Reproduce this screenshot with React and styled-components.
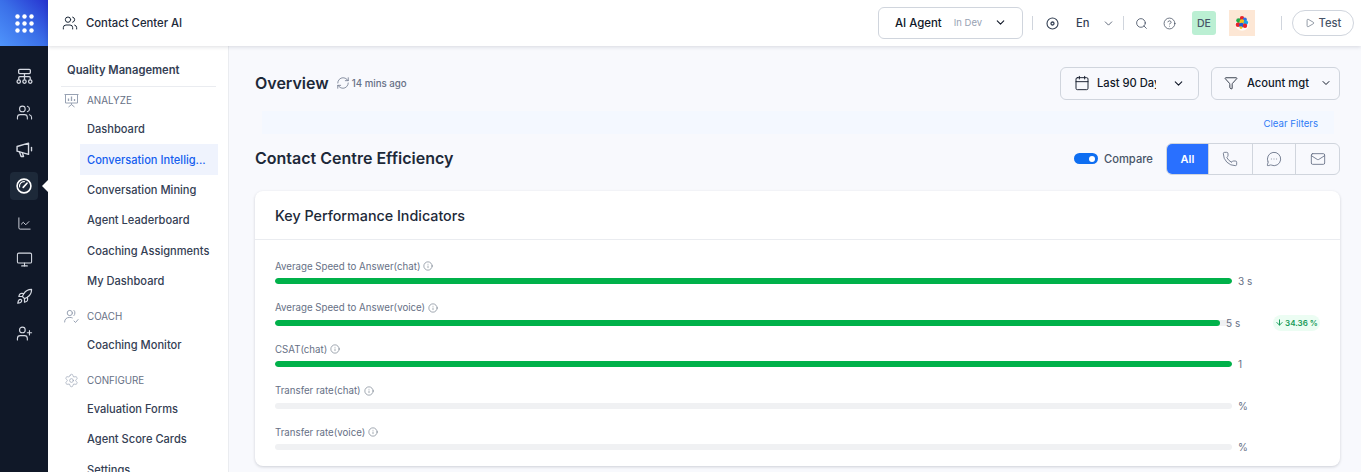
import React from "react";
import styled, { createGlobalStyle } from "styled-components";
import {
  Users, ChartLine, Monitor, Rocket, UserPlus, ChevronDown, Search,
  CircleHelp, Play, Calendar, Funnel, Phone, MessageCircleMore, Mail, RefreshCw, Info, ArrowDown,
  Settings,
} from "lucide-react";

const Global = createGlobalStyle`
  html, body { margin: 0; padding: 0; height: 472px; overflow: hidden; background: #f8f9fd; }
  body { font-family: Inter, "Noto Sans", sans-serif; color: #101828; }
  #root { height: 472px; }
  * { box-sizing: border-box; }
`;

const Page = styled.div`display: flex; width: 1361px; height: 472px; overflow: hidden;`;
const Rail = styled.nav`width: 48px; flex: none; background: #101828; display: flex; flex-direction: column; align-items: center;`;
const Logo = styled.div`
  width: 48px; height: 46px; display: grid; place-items: center; margin-bottom: 16px;
  background: linear-gradient(45deg, #4f94fb 0%, #3a6fe8 50%, #2632cf 100%);
`;
const RailSlot = styled.div`
  position: relative; width: 28px; height: 28px; margin-bottom: 8.8px; display: grid; place-items: center; border-radius: 4px;
  color: #d5d9e2; background: ${p => (p.$active ? "#1d2939" : "transparent")};
`;
const RailArrow = styled.span`
  position: absolute; right: -10px; top: 8px; width: 0; height: 0;
  border-top: 6px solid transparent; border-bottom: 6px solid transparent; border-right: 6px solid #fff;
`;
const Right = styled.div`flex: 1; min-width: 0; display: flex; flex-direction: column;`;
const Header = styled.header`
  position: relative; z-index: 2; height: 46px; flex: none; background: #fff; display: flex; align-items: center;
  box-shadow: 0 1px 4px rgba(16,24,40,.14); padding-left: 14px;
`;
const Product = styled.div`display: flex; align-items: center; gap: 8px; font-size: 11.3px; font-weight: 500; color: #1d2939; flex: 1;`;
const AgentBox = styled.div`
  width: 145px; height: 32px; border: 1px solid #d0d5dd; border-radius: 6px; display: flex; align-items: center; padding-left: 16px;
  font-size: 11.4px; font-weight: 500; color: #101828; margin-bottom: 1px;
`;
const Dev = styled.span`font-size: 9.5px; font-weight: 400; color: #98a2b3; margin-left: 12px; flex: 1;`;
const Divider = styled.span`width: 1px; height: 14px; background: #d0d5dd; flex: none; margin-left: ${p => p.$l}px; margin-right: ${p => p.$r}px;`;
const HeadIcon = styled.span`display: grid; place-items: center; color: #344054; margin-right: ${p => p.$r || 0}px; margin-top: 1px;`;
const Lang = styled.span`font-size: 11.2px; font-weight: 500; color: #344054; width: 26px; margin-left: 17px;`;
const Avatar = styled.span`
  width: 24px; height: 24px; border-radius: 3px; background: #bbefd3; color: #475467; font-size: 10.5px; font-weight: 500;
  display: grid; place-items: center; margin: 0 13px 0 16px;
`;
const Balloon = styled.span`width: 26px; height: 26px; background: #fde7d5; display: grid; place-items: center;`;
const TestBtn = styled.button`
  height: 26px; width: 62px; border: 1px solid #d0d5dd; border-radius: 13px; background: #fff; margin-right: 7px; margin-left: 10px;
  display: flex; align-items: center; justify-content: center; gap: 4px; font: 500 11.2px Inter, sans-serif; color: #475467; padding: 0;
`;
const Body = styled.div`flex: 1; display: flex; min-height: 0;`;
const Side = styled.aside`width: 181px; flex: none; background: #fff; border-right: 1px solid #eaecf0; padding: 15px 0 0 13px; overflow: hidden;`;
const SideTitle = styled.div`
  width: 155px; height: 26px; font-size: 11.2px; font-weight: 600; color: #344054; padding-left: 6px; padding-top: 1px;
  border-bottom: 1px solid #eaecf0; line-height: 16px;
`;
const Section = styled.div`
  display: flex; align-items: center; height: 22px; font-size: 9.8px; color: #667085; margin-top: ${p => p.$mt || 0}px; margin-bottom: ${p => p.$mb ?? 3}px; padding-left: 3px; gap: 8px;
  svg { color: #98a2b3; flex: none; }
`;
const NavItem = styled.div`
  width: 138px; height: 30.4px; margin-left: 19px; padding-left: 7px; display: flex; align-items: center;
  font-size: 11.1px; font-weight: 500; white-space: nowrap; overflow: hidden;
  color: ${p => (p.$active ? "#155eef" : "#344054")}; background: ${p => (p.$active ? "#eff3fd" : "transparent")};
`;
const Main = styled.main`flex: 1; min-width: 0; padding: 0 21px 0 26px; display: flex; flex-direction: column; overflow: hidden;`;
const TopRow = styled.div`height: 65px; flex: none; display: flex; align-items: center; padding-top: 9px;`;
const Title = styled.h1`margin: 0; font-size: 16px; font-weight: 600; color: #1d2939; line-height: 20px;`;
const Ago = styled.div`display: flex; align-items: center; gap: 2px; margin-left: 7px; flex: 1; font-size: 9.7px; font-weight: 500; color: #667085; svg { color: #667085; }`;
const Select = styled.div`
  width: ${p => p.$w}px; height: 33px; margin-left: ${p => p.$l || 0}px; border: 1px solid #d0d5dd; border-radius: 6px;
  display: flex; align-items: center; font-size: 11.2px; font-weight: 500; color: #101828; padding-left: ${p => p.$p}px;
`;
const SelText = styled.span`margin-left: ${p => p.$l}px; width: ${p => p.$w}px; overflow: hidden; white-space: nowrap;`;
const Band = styled.div`
  height: 23px; flex: none; margin: 0 6px 0 7px; background: #f4f8ff; display: flex; justify-content: flex-end; align-items: flex-end;
  font-size: 9.6px; color: #2f7bf6; padding: 0 16px 5px 0;
`;
const SecRow = styled.div`height: 49px; flex: none; margin-bottom: 8px; display: flex; align-items: center;`;
const SecTitle = styled.h2`margin: 0 0 2px; flex: 1; font-size: 16px; font-weight: 600; color: #1d2939;`;
const Toggle = styled.span`width: 24px; height: 11px; border-radius: 6px; background: #0e6ef1; display: flex; justify-content: flex-end; align-items: center; padding-right: 3px; &::after { content: ""; width: 6px; height: 6px; border-radius: 50%; background: #fff; }`;
const CompareLabel = styled.span`font-size: 11.2px; font-weight: 500; color: #475467; margin: 0 13px 0 6px;`;
const Tabs = styled.div`display: flex; height: 32px; border: 1px solid #d0d5dd; border-radius: 6px; overflow: hidden;`;
const Tab = styled.div`
  width: ${p => p.$w || 43.7}px; display: grid; place-items: center; font-size: 11px; font-weight: 600; color: ${p => (p.$active ? "#fff" : "#667085")};
  background: ${p => (p.$active ? "#2970ff" : "transparent")}; border-left: ${p => (p.$first ? "0" : "1px solid #d0d5dd")};
`;
const Card = styled.section`height: 274.5px; flex: none; background: #fff; border-radius: 8px; box-shadow: 0 1px 3px rgba(16,24,40,.18);`;
const CardHead = styled.div`height: 49px; border-bottom: 1px solid #eaecf0; padding-left: 20px; display: flex; align-items: center; font-size: 14.3px; font-weight: 500; color: #1d2939;`;
const Rows = styled.div`padding: 18px 20px 0;`;
const Row = styled.div`height: 41.6px; display: flex; flex-direction: column;`;
const RowLabel = styled.div`height: 17px; padding-bottom: 1px; display: flex; align-items: center; gap: 3px; font-size: 9.7px; color: #667085; svg { color: #475467; }`;
const RowLine = styled.div`display: flex; align-items: center; height: 12px; position: relative;`;
const Track = styled.div`width: 957px; height: 6px; border-radius: 3px; background: #f0f1f3; flex: none; overflow: hidden;`;
const Fill = styled.div`height: 100%; background: #00b14a; border-radius: 3px;`;
const Value = styled.span`font-size: 10px; color: #667085; margin-left: ${p => p.$l}px;`;
const Delta = styled.span`
  position: absolute; left: 998px; top: -2px; width: 47px; height: 16px; border-radius: 8px; background: #ecfdf3; color: #169a58;
  display: flex; align-items: center; justify-content: center; gap: 1px; font-size: 8px; font-weight: 600;
`;

const NodeTree = () => (
  <svg width="17" height="17" viewBox="0 0 16 16" fill="none" stroke="currentColor" strokeWidth="1.2">
    <rect x="2.5" y="1.2" width="11" height="4" rx="1" /><path d="M8 5.2V11M2.6 11V9.2a1 1 0 0 1 1-1h8.8a1 1 0 0 1 1 1V11" />
    <circle cx="2.6" cy="12.8" r="1.6" /><circle cx="8" cy="12.8" r="1.6" /><circle cx="13.4" cy="12.8" r="1.6" />
  </svg>
);
const Horn = () => (
  <svg width="17" height="17" viewBox="0 0 16 16" fill="none" stroke="currentColor" strokeWidth="1.3" strokeLinejoin="round" strokeLinecap="round">
    <path d="M1 5.2 11.8 2v10.6L1 9.6z" /><path d="M3.2 10.2 4.8 14.6h2.3L6 11" /><path d="M14.6 6v3.2" />
  </svg>
);
const GaugeIcon = () => (
  <svg width="16" height="16" viewBox="0 0 16 16" fill="none" stroke="#fff" strokeLinecap="round">
    <circle cx="8" cy="8" r="6.9" strokeWidth="1.6" /><path d="M7.2 9.4 11 5.2" strokeWidth="1.7" /><path d="M3.6 9A4.5 4.5 0 0 1 8.4 3.6" strokeWidth="1.1" />
  </svg>
);
const RecordIcon = () => (
  <svg width="13" height="13" viewBox="0 0 13 13" fill="none" stroke="currentColor" strokeWidth="1.1">
    <circle cx="6.5" cy="6.5" r="5.5" /><circle cx="6.5" cy="6.5" r="1.5" strokeWidth="1.3" />
  </svg>
);
const BoardIcon = () => (
  <svg width="15" height="15" viewBox="0 0 15 15" fill="none" stroke="currentColor" strokeWidth="1">
    <path d="M.5 1.5h14M1.5 1.5v8.5h12V1.5M7.5 10v2M4.5 14l3-2.4 3 2.4" /><path d="M4.5 8V5.5M7.5 8V3.5M10.5 8V6" strokeWidth="1.3" />
  </svg>
);
const CoachIcon = () => (
  <svg width="15" height="15" viewBox="0 0 15 15" fill="none" stroke="currentColor" strokeWidth="1" strokeLinecap="round">
    <circle cx="5.8" cy="4" r="2.6" /><path d="M.6 13c0-3 2-4.6 5.2-4.6 1 0 1.8.2 2.5.5" /><path d="M10 1.4c1.3 1 1.3 4 0 5.2" /><path d="M10 12l1.5 1.5 2.6-3" />
  </svg>
);
const Grid = () => (
  <svg width="19" height="19" viewBox="0 0 19 19" fill="#fff">
    {[2.5, 9.5, 16.5].flatMap(y => [2.5, 9.5, 16.5].map(x => <circle key={`${x}-${y}`} cx={x} cy={y} r="2.2" />))}
  </svg>
);
const Balloons = () => (
  <svg width="16" height="16" viewBox="0 0 16 16">
    <circle cx="8" cy="9" r="6.8" fill="#fff" opacity=".8" />
    <circle cx="8" cy="3.2" r="2.2" fill="#e8232b" /><circle cx="10.8" cy="4.6" r="2.1" fill="#2f6fe0" />
    <circle cx="4.6" cy="5.6" r="2.4" fill="#23a84a" /><circle cx="8" cy="6.8" r="2.5" fill="#f7c21b" />
    <circle cx="11.8" cy="7.6" r="2.3" fill="#1aa3e8" /><circle cx="4" cy="9.8" r="2.3" fill="#e8232b" />
    <circle cx="7.6" cy="10.2" r="2.4" fill="#1f5fd8" /><circle cx="11" cy="10.8" r="2.2" fill="#e8232b" />
    <circle cx="7" cy="12.6" r="1.4" fill="#f7c21b" />
  </svg>
);

const nav1 = ["Dashboard", "Conversation Intellig...", "Conversation Mining", "Agent Leaderboard", "Coaching Assignments", "My Dashboard"];
const rows = [
  { label: "Average Speed to Answer(chat)", width: 100, value: "3 s", l: 6 },
  { label: "Average Speed to Answer(voice)", width: 98.75, value: "5 s", l: -6, delta: "34.36 %" },
  { label: "CSAT(chat)", width: 100, value: "1", l: 6 },
  { label: "Transfer rate(chat)", width: 0, value: "%", l: 6 },
  { label: "Transfer rate(voice)", width: 0, value: "%", l: 6 },
];

export default function App() {
  return (
    <Page>
      <Global />
      <Rail>
        <Logo><Grid /></Logo>
        <RailSlot><NodeTree /></RailSlot>
        <RailSlot><Users size={17} strokeWidth={1.5} /></RailSlot>
        <RailSlot><Horn /></RailSlot>
        <RailSlot $active><GaugeIcon /><RailArrow /></RailSlot>
        <RailSlot><ChartLine size={15} strokeWidth={1.5} /></RailSlot>
        <RailSlot><Monitor size={17} strokeWidth={1.5} /></RailSlot>
        <RailSlot><Rocket size={17} strokeWidth={1.7} /></RailSlot>
        <RailSlot><UserPlus size={17} strokeWidth={1.6} /></RailSlot>
      </Rail>
      <Right>
        <Header>
          <Product><Users size={16} strokeWidth={1.5} />Contact Center AI</Product>
          <AgentBox>AI Agent<Dev>In Dev</Dev><ChevronDown size={13} style={{ marginRight: 15 }} /></AgentBox>
          <Divider $l={9} $r={13} />
          <HeadIcon><RecordIcon /></HeadIcon>
          <Lang>En</Lang>
          <HeadIcon><ChevronDown size={13} strokeWidth={1.4} /></HeadIcon>
          <Divider $l={8} $r={11} />
          <HeadIcon $r={15}><Search size={13} strokeWidth={1.4} /></HeadIcon>
          <HeadIcon><CircleHelp size={13} strokeWidth={1.3} /></HeadIcon>
          <Avatar>DE</Avatar>
          <Balloon><Balloons /></Balloon>
          <Divider $l={26} $r={0} />
          <TestBtn><Play size={10} strokeWidth={1.4} />Test</TestBtn>
        </Header>
        <Body>
          <Side>
            <SideTitle>Quality Management</SideTitle>
            <Section $mt={2}><BoardIcon />ANALYZE</Section>
            {nav1.map((n, i) => <NavItem key={n} $active={i === 1}>{n}</NavItem>)}
            <Section $mt={9} $mb={2}><CoachIcon />COACH</Section>
            <NavItem>Coaching Monitor</NavItem>
            <Section $mt={10} $mb={2}><Settings size={15} strokeWidth={1.1} />CONFIGURE</Section>
            <NavItem>Evaluation Forms</NavItem>
            <NavItem>Agent Score Cards</NavItem>
            <NavItem>Settings</NavItem>
          </Side>
          <Main>
            <TopRow>
              <Title>Overview</Title>
              <Ago><RefreshCw size={14} strokeWidth={1.3} />14 mins ago</Ago>
              <Select $w={139} $p={13}><Calendar size={16} strokeWidth={1.4} /><SelText $l={7} $w={59}>Last 90 Days</SelText><ChevronDown size={13} style={{ marginLeft: 16 }} /></Select>
              <Select $w={129} $l={12} $p={12}><Funnel size={14} strokeWidth={1.4} /><SelText $l={9} $w={67}>Acount mgt</SelText><ChevronDown size={12} style={{ marginLeft: 6 }} /></Select>
            </TopRow>
            <Band>Clear Filters</Band>
            <SecRow>
              <SecTitle>Contact Centre Efficiency</SecTitle>
              <Toggle />
              <CompareLabel>Compare</CompareLabel>
              <Tabs>
                <Tab $active $first $w={41}>All</Tab>
                <Tab><Phone size={16} strokeWidth={1.3} /></Tab>
                <Tab><MessageCircleMore size={16} strokeWidth={1.3} /></Tab>
                <Tab><Mail size={16} strokeWidth={1.3} /></Tab>
              </Tabs>
            </SecRow>
            <Card>
              <CardHead>Key Performance Indicators</CardHead>
              <Rows>
                {rows.map(r => (
                  <Row key={r.label}>
                    <RowLabel>{r.label}<Info size={10} strokeWidth={1.2} /></RowLabel>
                    <RowLine>
                      <Track><Fill style={{ width: `${r.width}%` }} /></Track>
                      <Value $l={r.l}>{r.value}</Value>
                      {r.delta && <Delta><ArrowDown size={9} strokeWidth={2.6} />{r.delta}</Delta>}
                    </RowLine>
                  </Row>
                ))}
              </Rows>
            </Card>
          </Main>
        </Body>
      </Right>
    </Page>
  );
}
